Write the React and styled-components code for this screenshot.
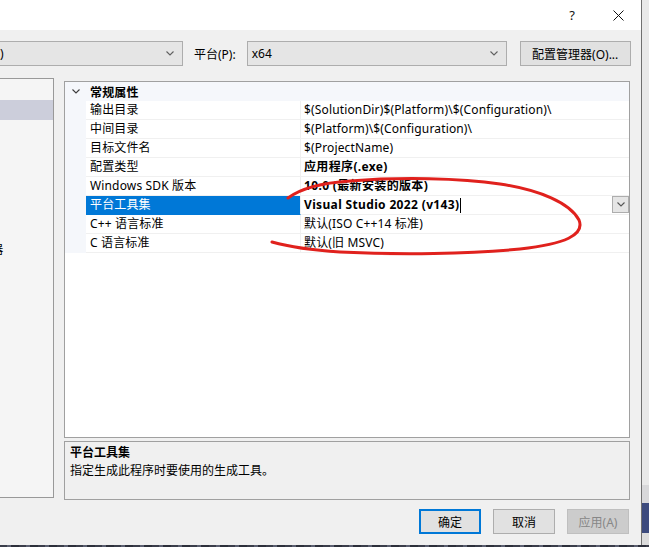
import React from "react";
import styled, { createGlobalStyle } from "styled-components";

const GlobalStyle = createGlobalStyle`
  html, body {
    margin: 0;
    padding: 0;
    background: #f0f0f0;
  }
  body {
    font-family: "Noto Sans", "Noto Sans CJK SC", sans-serif;
    font-size: 12px;
    color: #000;
  }
`;

const Screen = styled.div`
  position: relative;
  width: 649px;
  height: 547px;
  overflow: hidden;
  display: flex;
  flex-direction: column;
`;

const Upper = styled.div`
  display: flex;
  height: 545px;
`;

const Dialog = styled.div`
  width: 641px;
  display: flex;
  flex-direction: column;
  border-right: 1px solid #707070;
  background: #f0f0f0;
`;

const Outside = styled.div`
  flex: 1;
  display: flex;
  flex-direction: column;
`;

const OutsidePart = styled.div`
  height: ${({ $h }) => ($h ? `${$h}px` : "auto")};
  flex: ${({ $h }) => ($h ? "none" : 1)};
  background: ${({ $bg }) => $bg};
`;

const DesktopStrip = styled.div`
  height: 2px;
  background: repeating-linear-gradient(90deg, #3a3d4a 0 7px, #5b5f70 7px 11px, #2c2f3a 11px 19px);
`;

const TitleBar = styled.div`
  height: 30px;
  background: #fff;
  display: flex;
  justify-content: flex-end;
  align-items: center;
`;

const TitleButton = styled.div`
  width: 46px;
  height: 30px;
  display: flex;
  align-items: center;
  justify-content: center;
  font-size: 13px;
  color: #111;
`;

const Toolbar = styled.div`
  display: flex;
  align-items: center;
  padding-top: 11px;
  height: 25px;
`;

const Combo = styled.div`
  box-sizing: border-box;
  width: ${({ $w }) => $w}px;
  height: 25px;
  display: flex;
  align-items: center;
  justify-content: space-between;
  padding: 0 8px 0 4px;
  background: #e5e5e5;
  border: 1px solid #adadad;
  border-left: ${({ $cut }) => ($cut ? "none" : "1px solid #adadad")};
  padding-left: ${({ $cut }) => ($cut ? "0" : "4px")};
`;

const FieldLabel = styled.span`
  margin: 0 11px 0 11px;
`;

const PushButton = styled.button`
  box-sizing: border-box;
  width: ${({ $w }) => $w}px;
  height: 25px;
  margin-left: ${({ $ml }) => $ml}px;
  font: inherit;
  padding: 0;
  color: ${({ $disabled }) => ($disabled ? "#878787" : "#000")};
  background: ${({ $disabled }) => ($disabled ? "#cccccc" : "#e1e1e1")};
  border: ${({ $primary, $disabled }) =>
    $primary ? "2px solid #0078d7" : $disabled ? "1px solid #bfbfbf" : "1px solid #adadad"};
`;

const Main = styled.div`
  display: flex;
  margin-top: 12px;
`;

const TreePanel = styled.div`
  box-sizing: border-box;
  width: 54px;
  height: 420px;
  overflow: hidden;
  background: #f5f5f5;
  border: 1px solid #999;
  border-left: none;
  padding-top: 1px;
`;

const Tree = styled.div`
  margin-left: -150px;
  width: 203px;
`;

const TreeItem = styled.div`
  height: 20px;
  line-height: 20px;
  white-space: nowrap;
  padding-left: ${({ $indent }) => $indent}px;
  background: ${({ $selected }) => ($selected ? "#cccedb" : "transparent")};
`;

const RightColumn = styled.div`
  width: 566px;
  margin: 3px 0 0 10px;
  display: flex;
  flex-direction: column;
  gap: 3px;
`;

const PropertyGrid = styled.div`
  box-sizing: border-box;
  height: 357px;
  background: #fff;
  border: 1px solid #a0a0a0;
  letter-spacing: 0.15px;
`;

const CategoryRow = styled.div`
  display: flex;
  align-items: center;
  height: 19px;
  background: #f5f7fb;
  font-weight: bold;
`;

const Gutter = styled.div`
  width: 21px;
  height: 100%;
  flex: none;
  display: flex;
  align-items: center;
  justify-content: center;
  background: #f5f7fb;
`;

const PropRow = styled.div`
  display: flex;
  height: 19px;
`;

const NameCell = styled.div`
  box-sizing: border-box;
  width: 215px;
  flex: none;
  padding-left: 4px;
  line-height: 18px;
  white-space: nowrap;
  border-bottom: 1px solid ${({ $selected }) => ($selected ? "#0078d7" : "#f0f0f0")};
  border-right: 1px solid #f0f0f0;
  background: ${({ $selected }) => ($selected ? "#0078d7" : "#fff")};
  color: ${({ $selected }) => ($selected ? "#fff" : "#000")};
`;

const ValueCell = styled.div`
  box-sizing: border-box;
  flex: 1;
  display: flex;
  align-items: center;
  padding-left: 3px;
  line-height: 18px;
  white-space: nowrap;
  border-bottom: 1px solid #f0f0f0;
  font-weight: ${({ $bold }) => ($bold ? "bold" : "normal")};
  letter-spacing: ${({ $bold }) => ($bold ? "0.35px" : "0.15px")};
`;

const Caret = styled.span`
  display: inline-block;
  width: 1px;
  height: 15px;
  margin-left: 1px;
  background: #000;
`;

const CellDrop = styled.div`
  box-sizing: border-box;
  width: 17px;
  height: 17px;
  margin-left: auto;
  align-self: flex-start;
  display: flex;
  align-items: center;
  justify-content: center;
  background: #e5e5e5;
  border: 1px solid #adadad;
`;

const DescPanel = styled.div`
  box-sizing: border-box;
  height: 59px;
  border: 1px solid #a0a0a0;
  padding: 2px 5px;
  line-height: 18px;
`;

const DescTitle = styled.div`
  font-weight: bold;
`;

const ButtonRow = styled.div`
  display: flex;
  justify-content: flex-end;
  padding-right: 12px;
  margin-top: 9px;
`;

const Annotation = styled.svg`
  position: absolute;
  left: 0;
  top: 0;
  pointer-events: none;
`;

const Chevron = ({ color = "#606060", w = 8 }) => (
  <svg width={w} height={5} viewBox="0 0 8 5">
    <polyline points="0.5,0.5 4,4 7.5,0.5" fill="none" stroke={color} strokeWidth="1.1" />
  </svg>
);

const rows = [
  { name: "输出目录", value: "$(SolutionDir)$(Platform)\\$(Configuration)\\" },
  { name: "中间目录", value: "$(Platform)\\$(Configuration)\\" },
  { name: "目标文件名", value: "$(ProjectName)" },
  { name: "配置类型", value: "应用程序(.exe)", bold: true },
  { name: "Windows SDK 版本", value: "10.0 (最新安装的版本)", bold: true },
  { name: "平台工具集", value: "Visual Studio 2022 (v143)", bold: true, selected: true },
  { name: "C++ 语言标准", value: "默认(ISO C++14 标准)" },
  { name: "C 语言标准", value: "默认(旧 MSVC)" },
];

const tree = [
  { label: "配置属性", indent: 40 },
  { label: "常规", indent: 66, selected: true },
  { label: "高级", indent: 66 },
  { label: "调试", indent: 66 },
  { label: "VC++ 目录", indent: 66 },
  { label: "C/C++", indent: 66 },
  { label: "链接器", indent: 66 },
  { label: "清单工具", indent: 66 },
  { label: "XML 文档生成器", indent: 66 },
  { label: "浏览信息", indent: 66 },
  { label: "生成事件", indent: 66 },
  { label: "自定义生成", indent: 66 },
  { label: "代码分析", indent: 66 },
];

export default function App() {
  return (
    <Screen>
      <GlobalStyle />
      <Upper>
        <Dialog>
          <TitleBar>
            <TitleButton>?</TitleButton>
            <TitleButton>
              <svg width="11" height="11" viewBox="0 0 11 11">
                <path d="M0.5 0.5 L10.5 10.5 M10.5 0.5 L0.5 10.5" stroke="#111" strokeWidth="1" />
              </svg>
            </TitleButton>
          </TitleBar>

          <Toolbar>
            <Combo $w={183} $cut>
              <span>)</span>
              <Chevron />
            </Combo>
            <FieldLabel>平台(P):</FieldLabel>
            <Combo $w={260}>
              <span>x64</span>
              <Chevron />
            </Combo>
            <PushButton $w={111} $ml={13}>配置管理器(O)...</PushButton>
          </Toolbar>

          <Main>
            <TreePanel>
              <Tree>
                {tree.map((t) => (
                  <TreeItem key={t.label} $indent={t.indent} $selected={t.selected}>
                    {t.label}
                  </TreeItem>
                ))}
              </Tree>
            </TreePanel>

            <RightColumn>
              <PropertyGrid>
                <CategoryRow>
                  <Gutter>
                    <Chevron color="#3c3c3c" />
                  </Gutter>
                  <span style={{ paddingLeft: 4 }}>常规属性</span>
                </CategoryRow>
                {rows.map((r) => (
                  <PropRow key={r.name}>
                    <Gutter />
                    <NameCell $selected={r.selected}>{r.name}</NameCell>
                    <ValueCell $bold={r.bold}>
                      {r.value}
                      {r.selected && <Caret />}
                      {r.selected && (
                        <CellDrop>
                          <Chevron color="#555" />
                        </CellDrop>
                      )}
                    </ValueCell>
                  </PropRow>
                ))}
              </PropertyGrid>

              <DescPanel>
                <DescTitle>平台工具集</DescTitle>
                <div>指定生成此程序时要使用的生成工具。</div>
              </DescPanel>
            </RightColumn>
          </Main>

          <ButtonRow>
            <PushButton $w={62} $ml={0} $primary>确定</PushButton>
            <PushButton $w={62} $ml={12}>取消</PushButton>
            <PushButton $w={62} $ml={12} $disabled>应用(A)</PushButton>
          </ButtonRow>
        </Dialog>

        <Outside>
          <OutsidePart $bg="#e9e9e9" />
          <OutsidePart $h={18} $bg="#d8d8da" />
          <OutsidePart $h={30} $bg="#3d4b7e" />
          <OutsidePart $h={12} $bg="#dcdcdc" />
        </Outside>
      </Upper>
      <DesktopStrip />

      <Annotation width="649" height="547" viewBox="0 0 649 547">
        <path
          d="M 288 198 C 300 189, 320 183, 350 181 C 400 177, 460 178, 500 184 C 540 190, 570 203, 579 220 C 585 235, 565 244, 520 249 C 470 254, 400 255, 340 252 C 310 250, 290 247, 272 242"
          fill="none"
          stroke="#e0211d"
          strokeWidth="3"
          strokeLinecap="round"
        />
      </Annotation>
    </Screen>
  );
}
